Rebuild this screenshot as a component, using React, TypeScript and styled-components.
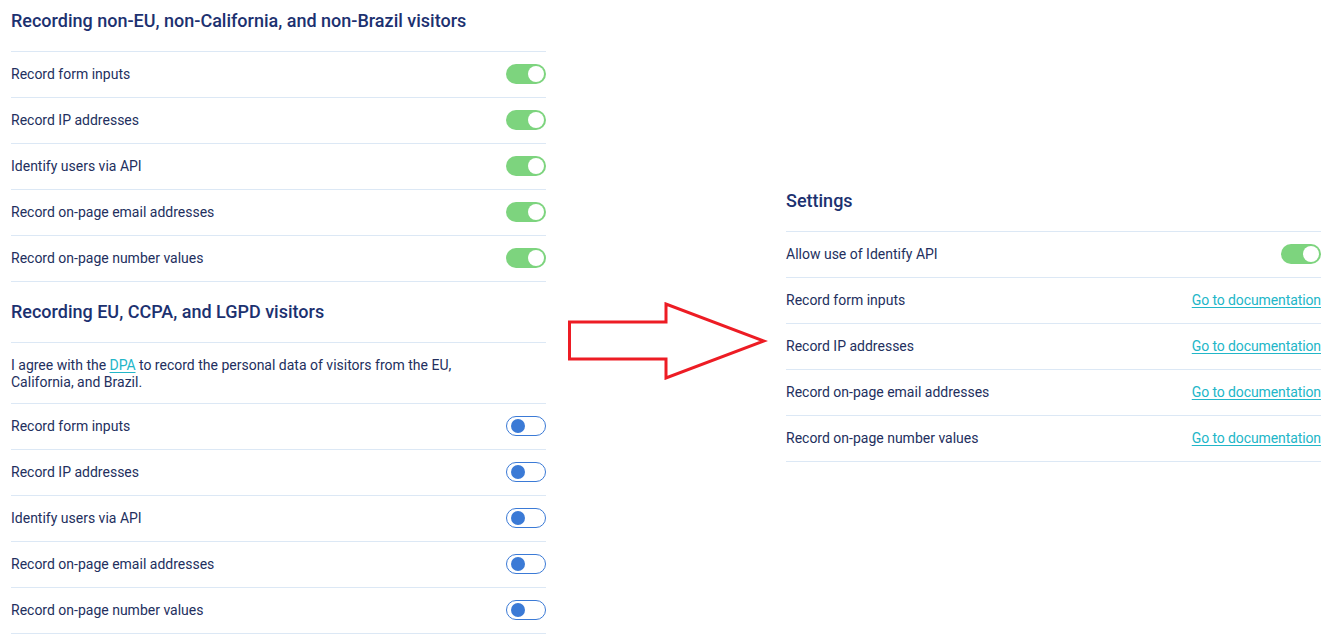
import React from 'react'
import styled, { createGlobalStyle } from 'styled-components'

const GlobalStyle = createGlobalStyle`
	body {
		margin: 0;
		background: #ffffff;
		font-family: Roboto, 'Liberation Sans', Arial, sans-serif;
		color: #232f5e;
	}
`

const Page = styled.div`
	display: flex;
	align-items: flex-start;
	padding-left: 11px;
	width: 1328px;
	height: 634px;
	overflow: hidden;
	box-sizing: border-box;
`

const Column = styled.div<{ $top?: number }>`
	width: 535px;
	flex-shrink: 0;
	margin-top: ${(p) => p.$top || 0}px;
`

const Section = styled.section<{ $first?: boolean }>`
	padding-top: ${(p) => (p.$first ? 9 : 18)}px;
`

const Heading = styled.h2`
	margin: 0;
	padding-bottom: 18px;
	font-size: 18px;
	line-height: 24px;
	font-weight: 500;
	color: #1c3170;
	border-bottom: 1px solid #dce8f5;
`

const Row = styled.div`
	display: flex;
	align-items: center;
	justify-content: space-between;
	height: 46px;
	box-sizing: border-box;
	padding-bottom: 1px;
	border-bottom: 1px solid #dce8f5;
	font-size: 14px;
`

const Note = styled.div`
	padding: 14px 0 12px;
	font-size: 14px;
	line-height: 17px;
	border-bottom: 1px solid #dce8f5;
`

const NoteText = styled.p`
	margin: 0;
	max-width: 460px;
`

const DocLink = styled.a`
	color: #22b6c8;
	text-decoration: underline;
	text-underline-offset: 2px;
	font-size: 14px;
	letter-spacing: -0.1px;
	cursor: pointer;
`

const Toggle = styled.span<{ $on: boolean }>`
	display: flex;
	align-items: center;
	justify-content: ${(p) => (p.$on ? 'flex-end' : 'flex-start')};
	width: 40px;
	height: 20px;
	box-sizing: border-box;
	border-radius: 10px;
	padding: ${(p) => (p.$on ? '0 2px' : '0 4px')};
	background: ${(p) => (p.$on ? '#7dd47e' : '#ffffff')};
	border: ${(p) => (p.$on ? 'none' : '1.5px solid #3b7ad6')};

	&::after {
		content: '';
		display: block;
		width: ${(p) => (p.$on ? 16 : 14)}px;
		height: ${(p) => (p.$on ? 16 : 14)}px;
		border-radius: 50%;
		background: ${(p) => (p.$on ? '#ffffff' : '#3b7ad6')};
	}
`

const ArrowBox = styled.div`
	margin: 302px 18px 0 22px;
	width: 200px;
	height: 78px;
	flex-shrink: 0;
`

const rows = [
	'Record form inputs',
	'Record IP addresses',
	'Identify users via API',
	'Record on-page email addresses',
	'Record on-page number values',
]

const docRows = [
	'Record form inputs',
	'Record IP addresses',
	'Record on-page email addresses',
	'Record on-page number values',
]

const Arrow = () => (
	<ArrowBox>
		<svg width="200" height="78" viewBox="0 0 200 78">
			<polygon
				points="1.5,20 98,20 98,2 196,39 98,76 98,57 1.5,57"
				fill="none"
				stroke="#ed1c24"
				strokeWidth="3"
			/>
		</svg>
	</ArrowBox>
)

export default function App() {
	return (
		<Page>
			<GlobalStyle />
			<Column>
				<Section $first>
					<Heading>Recording non-EU, non-California, and non-Brazil visitors</Heading>
					{rows.map((label) => (
						<Row key={label}>
							{label}
							<Toggle $on />
						</Row>
					))}
				</Section>
				<Section>
					<Heading>Recording EU, CCPA, and LGPD visitors</Heading>
					<Note>
						<NoteText>
							I agree with the <DocLink>DPA</DocLink> to record the personal data of visitors from the EU,
							California, and Brazil.
						</NoteText>
					</Note>
					{rows.map((label) => (
						<Row key={label}>
							{label}
							<Toggle $on={false} />
						</Row>
					))}
				</Section>
			</Column>
			<Arrow />
			<Column $top={180}>
				<Section $first>
					<Heading>Settings</Heading>
					<Row>
						Allow use of Identify API
						<Toggle $on />
					</Row>
					{docRows.map((label) => (
						<Row key={label}>
							{label}
							<DocLink>Go to documentation</DocLink>
						</Row>
					))}
				</Section>
			</Column>
		</Page>
	)
}
